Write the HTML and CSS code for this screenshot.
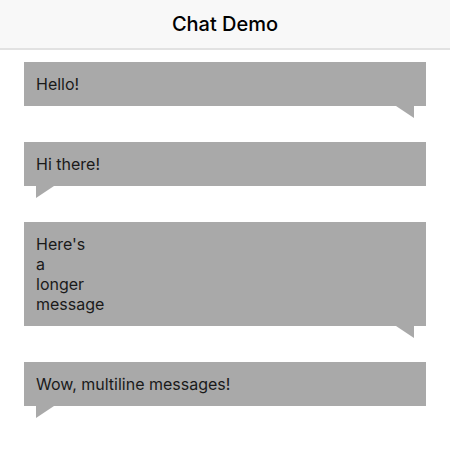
FILE: index.html
```html
<!DOCTYPE html>
<html lang="en">
<head>
    <meta charset="UTF-8">
    <meta name="viewport" content="width=device-width, initial-scale=1.0">
    <title>Chat Demo</title>
    <link rel="stylesheet" href="styles.css">
</head>
<body>
    <!-- Navigation Bar -->
    <header class="nav-bar">
        <h1>Chat Demo</h1>
    </header>

    <!-- Message List -->
    <div class="messages">
        <div class="bubble sent">Hello!</div>
        <div class="bubble received">Hi there!</div>
        <div class="bubble sent">Here's<br>a<br>longer<br>message</div>
        <div class="bubble received">Wow, multiline messages!</div>
    </div>
</body>
</html>
```

FILE: styles.css
```css
body {
    margin: 0;
    padding: 0;
    background-color: #fff;
    color: #1a1a1a;
    font-family: Inter, "Liberation Sans", Arial, sans-serif;
}

.nav-bar {
    height: 48px;
    background-color: #f8f8f8;
    border-bottom: 2px solid #e2e2e2;
    display: flex;
    align-items: center;
    justify-content: center;
}

.nav-bar h1 {
    margin: 0;
    font-size: 20px;
    font-weight: 500;
    color: #000;
}

.messages {
    display: flex;
    flex-direction: column;
    gap: 36px;
    padding: 12px 24px;
}

.bubble {
    position: relative;
    background-color: #a9a9a9;
    padding: 12px;
    font-size: 16px;
    line-height: 20px;
}

/* Speech bubble tails */
.bubble::after {
    content: "";
    position: absolute;
    top: 100%;
    width: 18px;
    height: 12px;
    background-color: #a9a9a9;
}

.sent::after {
    right: 12px;
    clip-path: polygon(0 0, 100% 0, 100% 100%);
}

.received::after {
    left: 12px;
    clip-path: polygon(0 0, 100% 0, 0 100%);
}
```
